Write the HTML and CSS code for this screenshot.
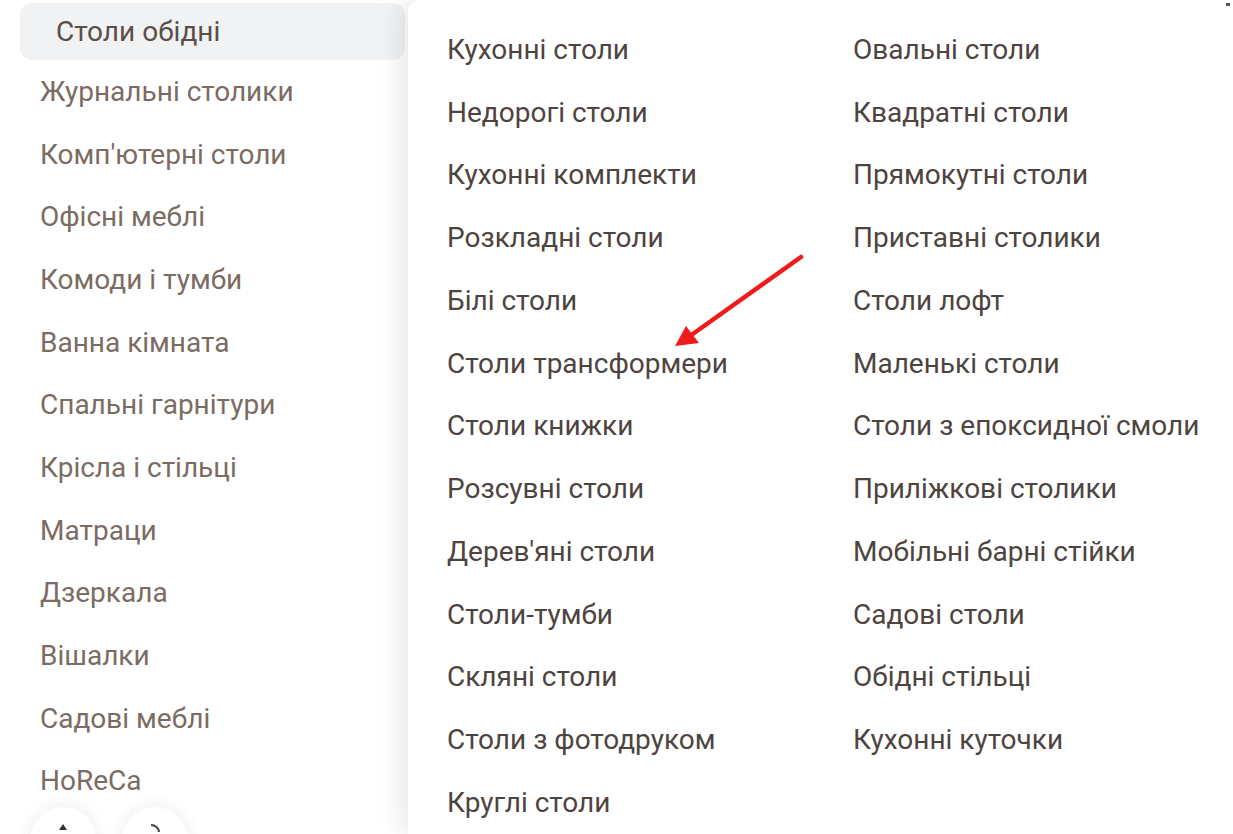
FILE: index.html
```html
<!DOCTYPE html>
<html lang="uk">
<head>
    <meta charset="UTF-8">
    <meta name="viewport" content="width=device-width, initial-scale=1.0">
    <title>Каталог меблів</title>
    <link rel="stylesheet" href="styles.css">
</head>
<body>

    <!-- ліве меню категорій -->
    <nav class="side-menu">
        <ul class="side-list">
            <li class="side-item active">Столи обідні</li>
            <li class="side-item">Журнальні столики</li>
            <li class="side-item">Комп'ютерні столи</li>
            <li class="side-item">Офісні меблі</li>
            <li class="side-item">Комоди і тумби</li>
            <li class="side-item">Ванна кімната</li>
            <li class="side-item">Спальні гарнітури</li>
            <li class="side-item">Крісла і стільці</li>
            <li class="side-item">Матраци</li>
            <li class="side-item">Дзеркала</li>
            <li class="side-item">Вішалки</li>
            <li class="side-item">Садові меблі</li>
            <li class="side-item">HoReCa</li>
        </ul>
    </nav>

    <!-- підменю -->
    <section class="sub-menu">
        <ul class="sub-list">
            <li>Кухонні столи</li>
            <li>Недорогі столи</li>
            <li>Кухонні комплекти</li>
            <li>Розкладні столи</li>
            <li>Білі столи</li>
            <li>Столи трансформери</li>
            <li>Столи книжки</li>
            <li>Розсувні столи</li>
            <li>Дерев'яні столи</li>
            <li>Столи-тумби</li>
            <li>Скляні столи</li>
            <li>Столи з фотодруком</li>
            <li>Круглі столи</li>
        </ul>
        <ul class="sub-list">
            <li>Овальні столи</li>
            <li>Квадратні столи</li>
            <li>Прямокутні столи</li>
            <li>Приставні столики</li>
            <li>Столи лофт</li>
            <li>Маленькі столи</li>
            <li>Столи з епоксидної смоли</li>
            <li>Приліжкові столики</li>
            <li>Мобільні барні стійки</li>
            <li>Садові столи</li>
            <li>Обідні стільці</li>
            <li>Кухонні куточки</li>
        </ul>
    </section>

    <!-- плаваючі кнопки -->
    <div class="float-buttons">
        <span class="round-btn">
            <svg width="24" height="24" viewBox="0 0 24 24"><path d="M12 3 L16 9 L8 9 Z" fill="#333"/></svg>
        </span>
        <span class="round-btn">
            <svg width="24" height="24" viewBox="0 0 24 24"><path d="M8 4 C12 4 16 7 16 11" fill="none" stroke="#444" stroke-width="2"/></svg>
        </span>
    </div>

    <!-- стрілка-позначка -->
    <svg class="arrow" width="1233" height="834" viewBox="0 0 1233 834">
        <line x1="801" y1="257" x2="690" y2="336" stroke="#f21b1b" stroke-width="4.5" stroke-linecap="round"/>
        <polygon points="675,346 686,326 699,343" fill="#f21b1b"/>
    </svg>

    <span class="corner-dot"></span>

</body>
</html>
```

FILE: styles.css
```css
body {
    margin: 0;
    font-family: Roboto, "Noto Sans", sans-serif;
    background-color: #fff;
    display: flex;
    height: 834px;
    overflow: hidden;
}

ul {
    list-style: none;
    margin: 0;
    padding: 0;
}

.side-menu {
    width: 408px;
    flex-shrink: 0;
    background-color: #fff;
}

.side-list {
    padding: 0 3px 0 20px;
}

.side-item {
    height: 62.7px;
    display: flex;
    align-items: center;
    padding-left: 20px;
    font-size: 28px;
    color: #7b6c63;
}

.side-item.active {
    height: 57px;
    margin: 3px 0 0;
    padding-left: 36px;
    background-color: #f1f2f4;
    border-radius: 12px;
    color: #5a4e48;
}

.sub-menu {
    flex: 1;
    display: flex;
    padding: 18px 0 0 39px;
    background-color: #fff;
    border-top-left-radius: 12px;
    box-shadow: -8px 0 24px rgba(0, 0, 0, 0.09);
    position: relative;
    z-index: 1;
}

.sub-list {
    width: 406px;
}

.sub-list li {
    height: 62.75px;
    display: flex;
    align-items: center;
    font-size: 28px;
    color: #4e443f;
    white-space: nowrap;
}

.float-buttons {
    position: fixed;
    left: 30px;
    top: 807px;
    display: flex;
    gap: 26px;
    z-index: 2;
}

.round-btn {
    width: 66px;
    height: 66px;
    border-radius: 50%;
    background-color: #fff;
    box-shadow: 0 0 18px rgba(0, 0, 0, 0.08);
    display: flex;
    justify-content: center;
    padding-top: 14px;
    box-sizing: border-box;
}

.arrow {
    position: absolute;
    left: 0;
    top: 0;
    z-index: 3;
    pointer-events: none;
}

.corner-dot {
    position: absolute;
    top: 3px;
    left: 1226px;
    width: 4px;
    height: 3px;
    background-color: #555;
    z-index: 3;
}
```
